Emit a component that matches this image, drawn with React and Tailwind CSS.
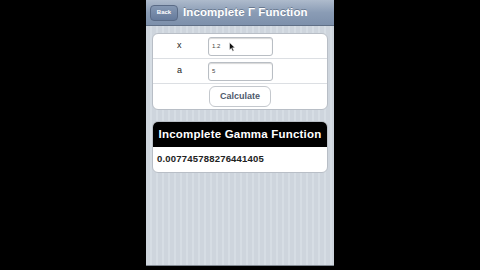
import React from "react";

export default function App() {
  const font = { fontFamily: '"Liberation Sans", Arial, sans-serif' };
  return (
    <div className="w-[480px] h-[270px] bg-black flex justify-center overflow-hidden" style={font}>
      <div className="w-[188px] h-[266px] flex flex-col bg-[repeating-linear-gradient(90deg,#ced5dd_0px,#ced5dd_4px,#d6dde4_4px,#d6dde4_6px)] border-b border-[#7f8790]">
        {/* nav bar */}
        <div className="h-[26px] shrink-0 flex items-center gap-[5px] px-[4px] bg-[linear-gradient(#aebbcc,#8a9cb5_50%,#7d90ab)] border-b border-[#5f6f86]">
          <div className="h-[16px] w-[28px] rounded-[4px] bg-[linear-gradient(#8598b3,#667b9c)] border border-[#5a6b86] flex items-center justify-center text-[6px] font-bold text-white">
            Back
          </div>
          <div className="text-[11.5px] font-bold text-white tracking-[0.1px] [text-shadow:0_-1px_0_#6a7a90]">
            Incomplete Γ Function
          </div>
        </div>

        {/* form card */}
        <div className="mx-[6px] mt-[7px] bg-white rounded-[6px] border border-[#b8bec6] flex flex-col text-[9px]">
          <div className="h-[25px] flex items-center border-b border-[#dcdfe3] relative">
            <div className="w-[55px] pl-[24px] text-[#222]">x</div>
            <div className="w-[65px] h-[19px] border border-[#b9bec4] rounded-[3px] flex items-center pl-[3px] text-[6px] text-[#444] shadow-[inset_0_1px_1px_#d8d8d8]">
              1.2
            </div>
            <svg className="absolute left-[76px] top-[8px]" width="7" height="10" viewBox="0 0 7 10">
              <path d="M0.5 0.5 L0.5 8 L2.3 6.3 L3.7 9.3 L4.9 8.8 L3.5 5.8 L6 5.8 Z" fill="#111" stroke="#fff" strokeWidth="0.5" />
            </svg>
          </div>
          <div className="h-[25px] flex items-center border-b border-[#dcdfe3]">
            <div className="w-[55px] pl-[24px] text-[#222]">a</div>
            <div className="w-[65px] h-[19px] border border-[#b9bec4] rounded-[3px] flex items-center pl-[3px] text-[6px] text-[#444] shadow-[inset_0_1px_1px_#d8d8d8]">
              5
            </div>
          </div>
          <div className="h-[25px] flex items-center">
            <div className="ml-[56px] w-[62px] h-[21px] border border-[#c4c8cd] rounded-[6px] flex items-center justify-center text-[9px] font-bold text-[#4e5a6c] bg-white">
              Calculate
            </div>
          </div>
        </div>

        {/* result card */}
        <div className="mx-[6px] mt-[11px] rounded-[6px] overflow-hidden border border-[#b8bec6] bg-white flex flex-col">
          <div className="h-[25px] bg-black flex items-center justify-center text-[11.5px] font-bold text-white tracking-[0.2px]">
            Incomplete Gamma Function
          </div>
          <div className="h-[25px] flex items-center pl-[4px] text-[9.5px] font-bold text-[#222] tracking-[0.2px]">
            0.007745788276441405
          </div>
        </div>
      </div>
    </div>
  );
}
